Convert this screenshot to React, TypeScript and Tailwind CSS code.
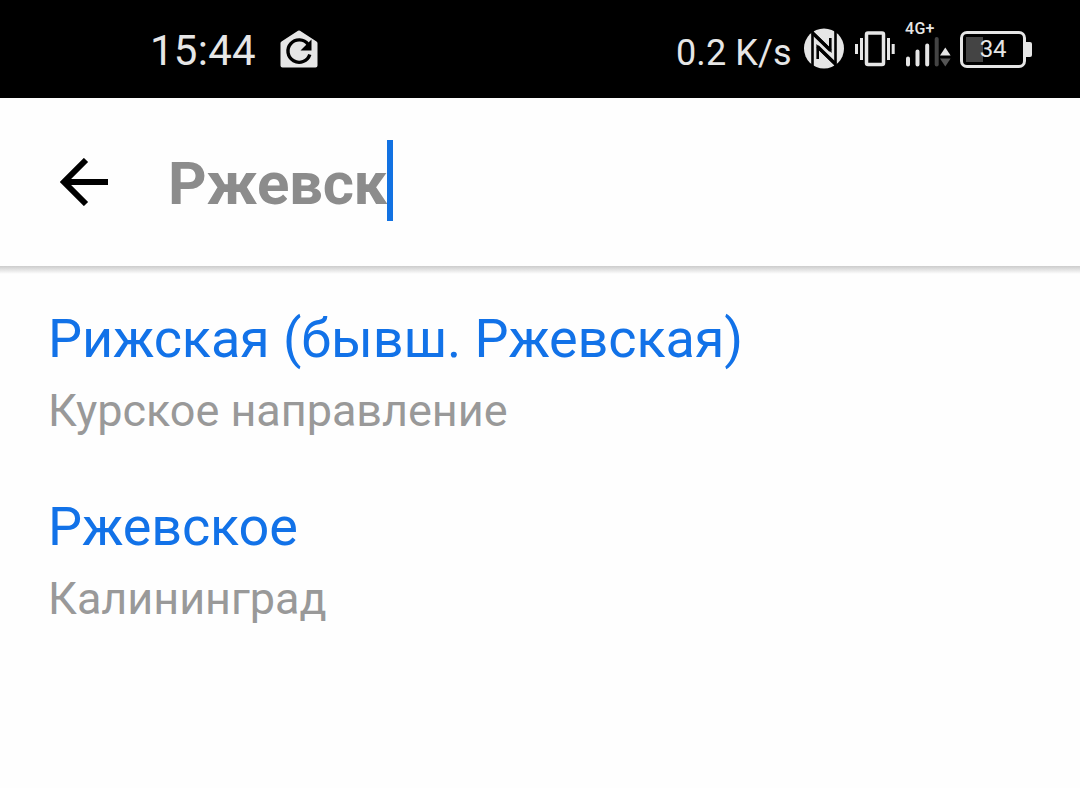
import React from 'react'

const stations = [
  { name: 'Рижская (бывш. Ржевская)', place: 'Курское направление' },
  { name: 'Ржевское', place: 'Калининград' },
]

function HouseIcon() {
  return (
    <svg className="ml-[24px] w-[38px] h-[38px] shrink-0" viewBox="0 0 38 38" fill="none">
      <path d="M18 .8q1-.7 2 0l16.500 10.600q1 .7 1 1.800V35.500q0 2-2 2H2.500q-2 0-2-2V13.200q0-1.100 1-1.800z" fill="#e6e6e6" />
      <path d="M28.200 14.500A11.200 11.200 0 1 0 29.800 24.500" stroke="#000" strokeWidth="3.400" />
      <path d="M31.500 9.500v11H20.500z" fill="#000" />
    </svg>
  )
}

function NfcIcon() {
  return (
    <svg className="-mt-[2px] w-[40px] h-[41px] shrink-0" viewBox="0 0 40 41" fill="none">
      <circle cx="20" cy="20.500" r="20" fill="#e6e6e6" />
      <g stroke="#000">
        <path d="M8.500 1v39M31.500 1v39" strokeWidth="2.600" />
        <path d="M8.500 4.500l17.800 17.300V10" strokeWidth="2.600" />
        <path d="M31.500 36.500L13.700 19.200V31" strokeWidth="2.600" />
        <path d="M8.500 5l18 17.500M31.500 36L13.500 18.500" strokeWidth="3.200" />
      </g>
    </svg>
  )
}

function VibrateIcon() {
  return (
    <svg className="ml-[11px] w-[40px] h-[36px] shrink-0" viewBox="0 0 40 36" fill="none">
      <rect x="11.500" y="2" width="17" height="31.500" rx="1.500" stroke="#e6e6e6" strokeWidth="3.500" />
      <path d="M6.500 7v22M33.500 7v22M1.500 13v10M38.200 13v10" stroke="#e6e6e6" strokeWidth="3" />
    </svg>
  )
}

function SignalIcon() {
  return (
    <div className="-mt-[8px] ml-[10px] w-[47px] h-[48px] shrink-0">
      <div className="h-[15px] text-[16px] leading-[15px] font-medium tracking-[0.3px] text-[#e6e6e6] whitespace-nowrap">4G+</div>
      <svg className="w-[47px] h-[33px]" viewBox="0 0 47 33" fill="none">
        <g strokeWidth="4" strokeLinecap="round" stroke="#e6e6e6">
          <path d="M3 22.500v6M12.500 15.500v13M22.200 9.500v19" />
          <path d="M31.700 3v25.500" stroke="#444" />
        </g>
        <path d="M35 19.500l5.300-8 5.300 8z" fill="#e6e6e6" />
        <path d="M35 22.500l5.300 8 5.300-8z" fill="#555" />
      </svg>
    </div>
  )
}

function Battery() {
  return (
    <div className="ml-[8px] flex shrink-0 items-center">
      <div className="relative h-[37px] w-[66px] rounded-[7px] border-[3px] border-[#e6e6e6] p-[3px]">
        <div className="h-full w-[17px] bg-[#444]" />
        <span className="absolute inset-0 flex items-center justify-center text-[24px] leading-[31px] tracking-[-0.3px] text-[#e6e6e6]">34</span>
      </div>
      <div className="h-[15px] w-[6px] rounded-r-[2px] bg-[#e6e6e6]" />
    </div>
  )
}

export default function App() {
  return (
    <div className="h-[788px] w-[1080px] overflow-hidden bg-[#fefefe] font-['Roboto',sans-serif]">
      <div className="flex h-[98px] items-center justify-between bg-black pl-[150px] pr-[48px] text-[#e6e6e6]">
        <div className="flex items-center">
          <span className="w-[106px] pt-[3px] text-[42px] leading-[48px] tracking-[0.25px] whitespace-nowrap">15:44</span>
          <HouseIcon />
        </div>
        <div className="flex items-center">
          <span className="w-[128px] pt-[7px] text-[36px] leading-[42px] tracking-[0.1px] whitespace-nowrap">0.2 K/s</span>
          <NfcIcon />
          <VibrateIcon />
          <SignalIcon />
          <Battery />
        </div>
      </div>

      <div className="flex h-[168px] items-center pl-[60px]">
        <svg className="h-[48px] w-[48px]" viewBox="0 0 48 48" fill="none">
          <path d="M48 24H4M26 2L4 24l22 22" stroke="#000" strokeWidth="6" />
        </svg>
        <div className="ml-[60px] flex items-center">
          <span className="w-[219px] pt-[3px] text-[60px] leading-[70px] font-bold tracking-[-0.3px] text-[#8c8c8c] whitespace-nowrap">Ржевск</span>
          <div className="-mt-[3px] h-[81px] w-[6px] bg-[#1272e2]" />
        </div>
      </div>
      <div className="h-[8px] bg-linear-to-b from-[#cccccc] to-[#fefefe]" />

      <div className="flex flex-col gap-[58px] pl-[48px] pt-[33px]">
        {stations.map((s) => (
          <div key={s.name}>
            <div className="text-[54px] leading-[64px] tracking-[-0.13px] text-[#1272e8] whitespace-nowrap">{s.name}</div>
            <div className="mt-[14px] text-[45px] leading-[52px] tracking-[-0.04px] text-[#999999] whitespace-nowrap">{s.place}</div>
          </div>
        ))}
      </div>
    </div>
  )
}
